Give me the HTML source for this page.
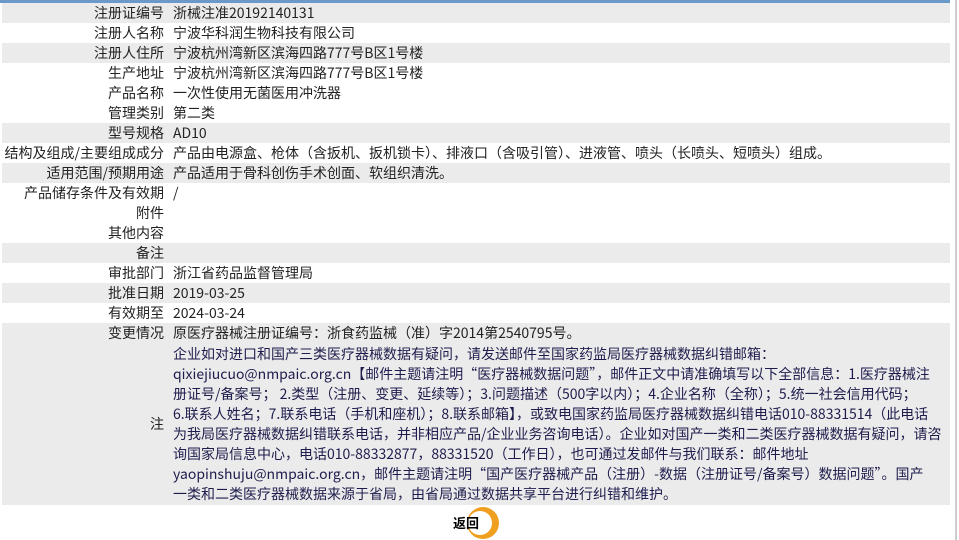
<!DOCTYPE html>
<html><head><meta charset="utf-8"><style>
body{margin:0;background:#fff;font-family:"Noto Sans CJK SC","Liberation Sans",sans-serif;font-size:14px;color:#222;width:959px;height:540px;overflow:hidden;position:relative}
.top{position:absolute;left:0;top:0;width:950px;height:3px;background:#6b9ac9}
table{position:absolute;left:2px;top:3px;width:948px;border-collapse:collapse;font-size:14px}
td{height:20px;padding:0;line-height:20px;vertical-align:middle;white-space:nowrap;overflow:hidden}
td.l{width:162px;text-align:right;padding-right:9px}
tr.g td{background:#ebebeb}
.n{color:#1e1c4c;line-height:20px;padding:1px 0}
.vl{position:absolute;left:955px;top:0;width:2px;height:540px;background:#ccc}
.back{position:absolute;left:453px;top:513px;font-weight:bold;font-size:13px;color:#000;line-height:20px}
.ring{position:absolute;left:465px;top:506px;width:35px;height:34px}
</style></head><body>
<div class="top"></div>
<div class="vl"></div>
<table>
<tr class="g"><td class="l">注册证编号</td><td>浙械注准20192140131</td></tr>
<tr><td class="l">注册人名称</td><td>宁波华科润生物科技有限公司</td></tr>
<tr class="g"><td class="l">注册人住所</td><td>宁波杭州湾新区滨海四路777号B区1号楼</td></tr>
<tr><td class="l">生产地址</td><td>宁波杭州湾新区滨海四路777号B区1号楼</td></tr>
<tr><td class="l">产品名称</td><td>一次性使用无菌医用冲洗器</td></tr>
<tr><td class="l">管理类别</td><td>第二类</td></tr>
<tr class="g"><td class="l">型号规格</td><td>AD10</td></tr>
<tr><td class="l">结构及组成/主要组成成分</td><td>产品由电源盒、枪体（含扳机、扳机锁卡）、排液口（含吸引管）、进液管、喷头（长喷头、短喷头）组成。</td></tr>
<tr class="g"><td class="l">适用范围/预期用途</td><td>产品适用于骨科创伤手术创面、软组织清洗。</td></tr>
<tr><td class="l">产品储存条件及有效期</td><td>/</td></tr>
<tr><td class="l">附件</td><td></td></tr>
<tr><td class="l">其他内容</td><td></td></tr>
<tr class="g"><td class="l">备注</td><td></td></tr>
<tr><td class="l">审批部门</td><td>浙江省药品监督管理局</td></tr>
<tr class="g"><td class="l">批准日期</td><td>2019-03-25</td></tr>
<tr><td class="l">有效期至</td><td>2024-03-24</td></tr>
<tr class="g"><td class="l">变更情况</td><td>原医疗器械注册证编号：浙食药监械（准）字2014第2540795号。</td></tr>
<tr class="g"><td class="l">注</td><td class="n">企业如对进口和国产三类医疗器械数据有疑问，请发送邮件至国家药监局医疗器械数据纠错邮箱：<br>qixiejiucuo@nmpaic.org.cn【邮件主题请注明“医疗器械数据问题”，邮件正文中请准确填写以下全部信息：1.医疗器械注<br>册证号/备案号； 2.类型（注册、变更、延续等）；3.问题描述（500字以内）；4.企业名称（全称）；5.统一社会信用代码；<br>6.联系人姓名；7.联系电话（手机和座机）；8.联系邮箱】，或致电国家药监局医疗器械数据纠错电话010-88331514（此电话<br>为我局医疗器械数据纠错联系电话，并非相应产品/企业业务咨询电话）。企业如对国产一类和二类医疗器械数据有疑问，请咨<br>询国家局信息中心，电话010-88332877，88331520（工作日），也可通过发邮件与我们联系：邮件地址<br>yaopinshuju@nmpaic.org.cn，邮件主题请注明“国产医疗器械产品（注册）-数据（注册证号/备案号）数据问题”。国产<br>一类和二类医疗器械数据来源于省局，由省局通过数据共享平台进行纠错和维护。</td></tr>
</table>
<svg class="ring" viewBox="0 0 35 34"><circle cx="18" cy="17" r="16" fill="#f0a020"/><circle cx="15" cy="17" r="12" fill="#fff"/></svg>
<div class="back">返回</div>
</body></html>
